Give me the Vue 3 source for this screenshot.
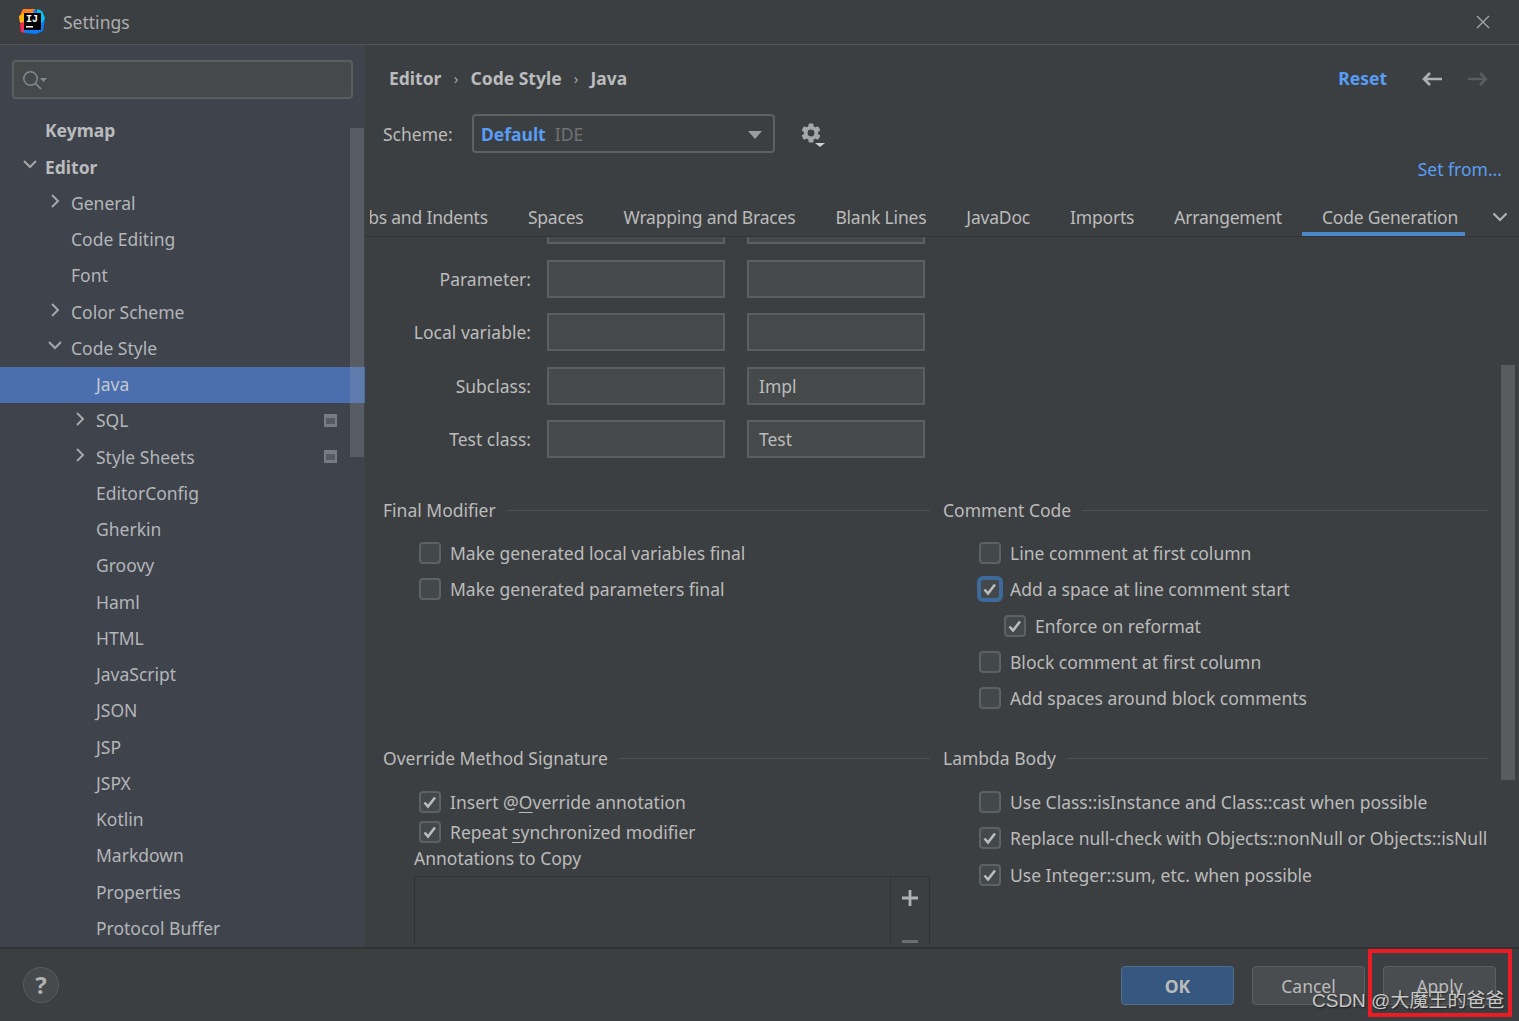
<script setup>
const tree = [
  { t: 'Keymap', d: 0, bold: true },
  { t: 'Editor', d: 0, bold: true, open: true },
  { t: 'General', d: 1, closed: true },
  { t: 'Code Editing', d: 1 },
  { t: 'Font', d: 1 },
  { t: 'Color Scheme', d: 1, closed: true },
  { t: 'Code Style', d: 1, open: true },
  { t: 'Java', d: 2, sel: true },
  { t: 'SQL', d: 2, closed: true, badge: true },
  { t: 'Style Sheets', d: 2, closed: true, badge: true },
  ...['EditorConfig', 'Gherkin', 'Groovy', 'Haml', 'HTML', 'JavaScript', 'JSON', 'JSP', 'JSPX', 'Kotlin', 'Markdown', 'Properties', 'Protocol Buffer'].map((t) => ({ t, d: 2 })),
]
const tabs = ['Tabs and Indents', 'Spaces', 'Wrapping and Braces', 'Blank Lines', 'JavaDoc', 'Imports', 'Arrangement', 'Code Generation']
const fields = [
  { l: 'Parameter:', a: '', b: '' },
  { l: 'Local variable:', a: '', b: '' },
  { l: 'Subclass:', a: '', b: 'Impl' },
  { l: 'Test class:', a: '', b: 'Test' },
]
const comment = [
  { t: 'Line comment at first column' },
  { t: 'Add a space at line comment start', c: true, focus: true },
  { t: 'Enforce on reformat', c: true, sub: true },
  { t: 'Block comment at first column' },
  { t: 'Add spaces around block comments' },
]
const lambda = [
  { t: 'Use Class::isInstance and Class::cast when possible' },
  { t: 'Replace null-check with Objects::nonNull or Objects::isNull', c: true },
  { t: 'Use Integer::sum, etc. when possible', c: true },
]
const gearTeeth = [0, 60, 120, 180, 240, 300]
</script>

<template>
  <div class="window">
    <header class="titlebar">
      <svg class="logo" width="26" height="26" viewBox="0 0 26 26">
        <path d="M3 1h11l2 4L5 16l1 8-4-1-1-7 2-3-3-3z" fill="#fe2857" />
        <path d="M4 0h12l1 4H7L4 8 1 7z" fill="#fc801d" />
        <path d="M0 7l5-3v9l-4 1z" fill="#fdb60d" />
        <path d="M14 1l9 2 3 6-2 13-7 3-11-1-2-3 12-8z" fill="#087cfa" />
        <path d="M18 0l5 2 3 7-3 5-4-6z" fill="#07c3f2" />
        <rect x="5" y="4" width="17" height="17" fill="#000" />
        <rect x="7" y="17" width="7" height="1.500" fill="#fff" />
        <text x="7" y="13" class="logo-text">IJ</text>
      </svg>
      <span class="title">Settings</span>
      <svg class="close" width="14" height="14" viewBox="0 0 14 14"><path d="M1 1l12 12M13 1 1 13" stroke="#a9a9a9" stroke-width="1.200" fill="none" /></svg>
    </header>

    <div class="body">
      <aside class="sidebar">
        <div class="search">
          <svg width="28" height="22" viewBox="0 0 28 22">
            <circle cx="9.500" cy="9.500" r="6.700" fill="none" stroke="#7f8b91" stroke-width="1.500" />
            <path d="M14.500 14.500 20 20" stroke="#7f8b91" stroke-width="1.700" />
            <path d="M19 9h7l-3.500 4z" fill="#7f8b91" />
          </svg>
        </div>
        <div class="tree">
          <div v-for="row in tree" :key="row.t" class="row" :class="[`d${row.d}`, { sel: row.sel, bold: row.bold }]">
            <svg v-if="row.closed" class="arrow" width="12" height="16" viewBox="0 0 12 16"><path d="M3 2l6 6-6 6" fill="none" stroke="#a5a7a9" stroke-width="2" /></svg>
            <svg v-else-if="row.open" class="arrow" width="16" height="12" viewBox="0 0 16 12"><path d="M2 2l6 6 6-6" fill="none" stroke="#a5a7a9" stroke-width="2" /></svg>
            <span class="row-text">{{ row.t }}</span>
            <svg v-if="row.badge" class="badge" width="13" height="13" viewBox="0 0 13 13"><rect width="13" height="13" fill="#747c84" /><rect x="2" y="4" width="9" height="6" fill="#565b62" /></svg>
          </div>
        </div>
        <div class="tree-thumb"></div>
      </aside>

      <main class="main">
        <div class="crumbs">
          <b>Editor</b><span class="sep">›</span><b>Code Style</b><span class="sep">›</span><b>Java</b>
          <span class="spring"></span>
          <a class="reset">Reset</a>
          <svg class="nav" width="22" height="16" viewBox="0 0 22 16"><path d="M21 8H3M9 2 3 8l6 6" fill="none" stroke="#afb1b3" stroke-width="2.600" /></svg>
          <svg class="nav next" width="22" height="16" viewBox="0 0 22 16"><path d="M1 8h18M13 2l6 6-6 6" fill="none" stroke="#5a5d5f" stroke-width="2.600" /></svg>
        </div>
        <div class="scheme">
          <span class="scheme-label">Scheme:</span>
          <div class="combo">
            <b>Default</b><span class="ide">IDE</span>
            <svg class="caret" width="14" height="8" viewBox="0 0 14 8"><path d="M0 0h14L7 8z" fill="#9a9c9e" /></svg>
          </div>
          <svg class="gear" width="26" height="26" viewBox="0 0 26 26">
            <rect v-for="a in gearTeeth" :key="a" x="7.500" y="0.500" width="5" height="5" rx="1" fill="#a5a7a9" :transform="`rotate(${a} 10 10)`" />
            <circle cx="10" cy="10" r="5.300" fill="none" stroke="#a5a7a9" stroke-width="3.800" />
            <path d="M14 20h10l-5 4z" fill="#d0d0d0" />
          </svg>
        </div>
        <div class="setfrom"><a>Set from...</a></div>
        <div class="tabbar">
          <div class="tabs">
            <span v-for="t in tabs" :key="t" class="tab" :class="{ active: t === 'Code Generation' }">{{ t }}</span>
          </div>
          <svg class="more" width="16" height="10" viewBox="0 0 16 10"><path d="M1.500 1.500 8 8l6.500-6.500" fill="none" stroke="#b0b2b4" stroke-width="2.200" /></svg>
        </div>

        <div class="pane">
          <div class="form">
            <div class="field"><span class="flabel"></span><i class="input"></i><i class="input"></i></div>
            <div v-for="f in fields" :key="f.l" class="field">
              <span class="flabel">{{ f.l }}</span>
              <i class="input">{{ f.a }}</i>
              <i class="input">{{ f.b }}</i>
            </div>
          </div>

          <div class="cols">
            <section class="group g-final">
              <h4><span>Final Modifier</span></h4>
              <label class="check"><i class="box"></i>Make generated local variables final</label>
              <label class="check"><i class="box"></i>Make generated parameters final</label>
            </section>
            <section class="group g-comment">
              <h4><span>Comment Code</span></h4>
              <label v-for="c in comment" :key="c.t" class="check" :class="{ sub: c.sub }">
                <i class="box" :class="{ focus: c.focus }">
                  <svg v-if="c.c" width="16" height="14" viewBox="0 0 16 14"><path d="M2.500 7.500 6 11.500 13 2.500" fill="none" stroke="#bcbcbc" stroke-width="2.600" /></svg>
                </i>{{ c.t }}
              </label>
            </section>
            <section class="group g-override">
              <h4><span>Override Method Signature</span></h4>
              <label class="check tight"><i class="box"><svg width="16" height="14" viewBox="0 0 16 14"><path d="M2.500 7.500 6 11.500 13 2.500" fill="none" stroke="#bcbcbc" stroke-width="2.600" /></svg></i><span>Insert @<u>O</u>verride annotation</span></label>
              <label class="check tight"><i class="box"><svg width="16" height="14" viewBox="0 0 16 14"><path d="M2.500 7.500 6 11.500 13 2.500" fill="none" stroke="#bcbcbc" stroke-width="2.600" /></svg></i><span>Repeat <u>s</u>ynchronized modifier</span></label>
              <div class="copy-label">Annotations to Copy</div>
              <div class="copy-list">
                <div class="copy-tools">
                  <svg width="16" height="16" viewBox="0 0 16 16"><path d="M8 0v16M0 8h16" stroke="#afb1b3" stroke-width="2.800" /></svg>
                  <svg class="minus" width="16" height="3" viewBox="0 0 16 3"><path d="M0 1.500h16" stroke="#6a6d6f" stroke-width="3" /></svg>
                </div>
              </div>
            </section>
            <section class="group g-lambda">
              <h4><span>Lambda Body</span></h4>
              <label v-for="c in lambda" :key="c.t" class="check">
                <i class="box">
                  <svg v-if="c.c" width="16" height="14" viewBox="0 0 16 14"><path d="M2.500 7.500 6 11.500 13 2.500" fill="none" stroke="#bcbcbc" stroke-width="2.600" /></svg>
                </i>{{ c.t }}
              </label>
            </section>
          </div>
          <div class="pane-thumb"></div>
        </div>
      </main>
    </div>

    <footer class="footer">
      <div class="help">?</div>
      <span class="spring"></span>
      <button class="btn primary">OK</button>
      <button class="btn">Cancel</button>
      <button class="btn">Apply</button>
    </footer>

    <div class="highlight"></div>
    <div class="watermark">CSDN @大魔王的爸爸</div>
  </div>
</template>

<style>
html, body { margin: 0; background: #3c3f41; }
</style>

<style scoped>
.window {
  position: relative;
  width: 1519px;
  height: 1021px;
  overflow: hidden;
  background: #3c3f41;
  color: #bbbbbb;
  font: 17.500px/24px "Noto Sans", "Noto Sans CJK SC", sans-serif;
  display: flex;
  flex-direction: column;
}
.titlebar {
  flex: none;
  height: 44px;
  border-bottom: 1px solid #555555;
  display: flex;
  align-items: center;
  padding: 0 29px 0 19px;
}
.logo { margin-right: 18px; }
.logo-text { font: bold 10px "Liberation Mono", monospace; fill: #fff; }
.title { flex: 1; color: #adadad; }
.body { flex: none; height: 902px; display: flex; }
.sidebar {
  position: relative;
  flex: none;
  width: 365px;
  background: #3f434c;
  overflow: hidden;
}
.search {
  margin: 15px 0 0 12px;
  width: 330px;
  height: 35px;
  border: 2px solid #5b5e60;
  border-radius: 4px;
  background: #45494a;
  display: flex;
  align-items: center;
  padding-left: 7px;
}
.tree { margin-top: 14.250px; }
.row {
  position: relative;
  height: 36.250px;
  box-sizing: border-box;
  padding-bottom: 2px;
  display: flex;
  align-items: center;
  color: #b4b6b8;
}
.row.d0 { padding-left: 45px; }
.row.d1 { padding-left: 71px; }
.row.d2 { padding-left: 96px; }
.row.bold { font-weight: 700; color: #b9bbbd; }
.row.sel { background: #4b6eaf; color: #c3c8cf; }
.arrow { position: absolute; margin-top: -3px; }
.d0 .arrow { left: 22px; }
.d1 .arrow { left: 49px; }
.d1 .arrow[width="16"] { left: 47px; }
.d2 .arrow { left: 74px; }
.badge { position: absolute; left: 324px; top: 10.500px; }
.tree-thumb {
  position: absolute;
  left: 350px;
  top: 83px;
  width: 14px;
  height: 329px;
  background: rgba(160, 165, 175, 0.26);
}
.main {
  flex: 1;
  min-width: 0;
  display: flex;
  flex-direction: column;
}
.crumbs {
  display: flex;
  align-items: center;
  height: 24px;
  margin-top: 21px;
  padding: 0 30px 0 24px;
}
.crumbs b { font-weight: 700; color: #b9bbbd; }
.sep { width: 29px; text-align: center; color: #a0a2a4; font-size: 15px; }
.spring { flex: 1; }
.reset { color: #589df6; font-weight: 700; margin-right: 34px; }
.nav { margin-top: 2px; }
.nav.next { margin-left: 24px; }
.scheme {
  margin-top: 24px;
  padding-left: 18px;
  height: 39px;
  display: flex;
  align-items: center;
}
.scheme-label { width: 89px; flex: none; }
.combo {
  width: 285px;
  height: 35px;
  padding: 0 7px;
  border: 2px solid #5e6163;
  border-radius: 4px;
  display: flex;
  align-items: center;
  position: relative;
}
.combo b { color: #589df6; font-weight: 700; }
.ide { color: #6f7173; margin-left: 9px; }
.caret { position: absolute; right: 11px; top: 15px; }
.gear { margin: 5px 0 0 26px; }
.setfrom {
  height: 24px;
  margin-top: 4px;
  padding-right: 17px;
  text-align: right;
}
.setfrom a { color: #589df6; }
.tabbar {
  position: relative;
  height: 36px;
  margin-top: 19px;
  border-bottom: 1px solid #323232;
}
.tabs {
  position: absolute;
  left: 5px;
  right: 54px;
  top: 0;
  height: 36px;
  overflow: hidden;
  display: flex;
  justify-content: flex-end;
  letter-spacing: -0.2px;
}
.tab {
  flex: none;
  padding: 5px 20px 0;
  white-space: nowrap;
}
.tab.active {
  box-shadow: inset 0 -4px 0 #4a88c7;
  padding-right: 7px;
}
.more { position: absolute; right: 11px; top: 12px; }
.pane {
  position: relative;
  flex: 1;
  min-height: 0;
  margin-bottom: 3px;
  overflow: hidden;
}
.form {
  height: 251px;
  display: flex;
  flex-direction: column;
  margin-top: -31px;
  gap: 15.500px;
}
.field {
  display: flex;
  align-items: center;
  padding-left: 16px;
}
.flabel { width: 150px; margin-right: 16px; text-align: right; }
.input {
  display: block;
  height: 34px;
  width: 164px;
  padding-left: 10px;
  margin-right: 22px;
  border: 2px solid #5c5e5f;
  background: #45494a;
  font-style: normal;
  line-height: 34px;
  color: #bbbbbb;
}
.cols {
  margin-top: 41px;
  padding-left: 18px;
  display: grid;
  grid-template-columns: 547px 546px;
  grid-template-rows: 248px auto;
  column-gap: 13px;
}
.group h4 {
  margin: 0 0 13px;
  font: inherit;
  height: 24px;
  display: flex;
  align-items: center;
  gap: 11px;
}
.group h4::after {
  content: "";
  flex: 1;
  height: 1px;
  background: #515151;
}
.check {
  display: flex;
  align-items: center;
  height: 36.250px;
  padding-left: 36px;
  white-space: nowrap;
}
.check.sub { padding-left: 61px; }
.check.tight { height: 30px; }
.group.g-override h4 { margin-bottom: 21px; }
.group.g-lambda h4 { margin-bottom: 14px; }
.g-override .check:first-of-type { margin-top: -4px; }
.box {
  flex: none;
  width: 18px;
  height: 18px;
  margin-right: 9px;
  border: 2px solid #5e6163;
  border-radius: 4px;
  background: #43494a;
  display: flex;
  align-items: center;
  justify-content: center;
}
.box.focus { box-shadow: 0 0 0 2px #3d6a9a; border-color: #3d6a9a; }
u { text-decoration-thickness: 1px; text-underline-offset: 3px; }
.copy-label { margin: -1px 0 0 31px; height: 24px; line-height: 24px; }
.copy-list {
  margin: 6px 0 0 31px;
  width: 514px;
  height: 90px;
  border: 1px solid #323232;
  border-bottom: 0;
  position: relative;
}
.copy-tools {
  position: absolute;
  right: 0;
  top: 0;
  bottom: 0;
  width: 39px;
  border-left: 1px solid #323232;
  box-sizing: border-box;
}
.copy-tools svg { position: absolute; left: 11px; top: 13px; }
.copy-tools .minus { top: 63px; }
.pane-thumb {
  position: absolute;
  right: 4px;
  top: 128px;
  width: 14px;
  height: 415px;
  background: #595b5d;
}
.footer {
  flex: none;
  height: 74px;
  border-top: 2px solid #323232;
  box-sizing: border-box;
  display: flex;
  align-items: center;
  padding: 0 23px 0 23px;
  gap: 18px;
}
.help {
  width: 34px;
  height: 34px;
  border: 1px solid #5a5d5f;
  border-radius: 50%;
  background: #46494b;
  color: #afb1b3;
  font: 700 24px/34px "Noto Sans", sans-serif;
  text-align: center;
}
.btn {
  width: 113px;
  height: 39px;
  margin-top: 1px;
  border: 1px solid #5e6060;
  border-radius: 4px;
  background: #4a4d4f;
  color: #bbbbbb;
  font: inherit;
  padding: 0;
}
.btn.primary {
  background: #365880;
  border-color: #4c708c;
  font-weight: 700;
}
.highlight {
  position: absolute;
  left: 1368px;
  top: 949px;
  width: 144px;
  height: 68px;
  border: 4px solid #ed1c24;
  box-sizing: border-box;
}
.watermark {
  position: absolute;
  left: 1312px;
  top: 989px;
  color: #c9c9c9;
  font: 19px/24px "Liberation Sans", "Noto Sans CJK SC", sans-serif;
  text-shadow: 1px 1px 2px #1c1c1c;
  white-space: nowrap;
}
</style>
